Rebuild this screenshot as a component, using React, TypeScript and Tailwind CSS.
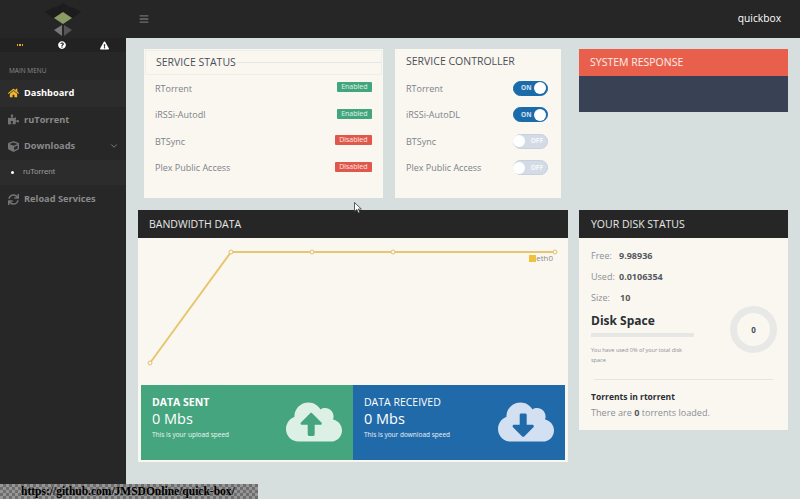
import {
  FaBars,
  FaCloudDownloadAlt,
  FaCloudUploadAlt,
  FaCube,
  FaExclamationTriangle,
  FaHome,
  FaPuzzlePiece,
  FaQuestionCircle,
  FaSync,
} from "react-icons/fa";
import { ChevronDown } from "lucide-react";

const statuses = [
  { name: "RTorrent", on: true },
  { name: "iRSSi-Autodl", on: true },
  { name: "BTSync", on: false },
  { name: "Plex Public Access", on: false },
];

const controls = [
  { name: "RTorrent", on: true },
  { name: "iRSSi-AutoDL", on: true },
  { name: "BTSync", on: false },
  { name: "Plex Public Access", on: false },
];

function Logo() {
  return (
    <svg width="42" height="34" viewBox="0 0 42 34">
      <path d="M21 0 L29 5 L21 10 L13 5Z" fill="#1d1d1d" />
      <path d="M3 9 L12 4 L20 10 L11 15Z" fill="#1c1c1c" />
      <path d="M39 9 L30 4 L22 10 L31 15Z" fill="#1c1c1c" />
      <path d="M21 9 L30 15 L21 21 L12 15Z" fill="#8b9b66" />
      <path d="M20 22 L20 33 L12 27Z" fill="#777777" />
      <path d="M22 22 L22 33 L30 27Z" fill="#555555" />
    </svg>
  );
}

function Toggle({ on }: { on: boolean }) {
  return (
    <div
      className={`flex items-center w-[35px] h-[15px] rounded-full px-[1px] border ${
        on ? "bg-[#1b6bab] border-[#1b6bab] justify-between" : "bg-[#d3dbe6] border-[#c8d0dc] flex-row-reverse justify-between"
      }`}
    >
      <span className="text-[6.5px] font-bold text-white/80 ml-[6px] mr-[3px] leading-none">
        {on ? "ON" : "OFF"}
      </span>
      <span className="w-[12px] h-[12px] rounded-full bg-white shrink-0" />
    </div>
  );
}

function NavItem({
  icon,
  label,
  active,
}: {
  icon: React.ReactNode;
  label: string;
  active?: boolean;
}) {
  return (
    <div
      className={`flex items-center h-[26.5px] pl-[8px] gap-[5px] text-[9.25px] font-bold ${
        active ? "text-white bg-[#2c2c2c]" : "text-[#8a8a8a]"
      }`}
    >
      <span className="w-[11px] flex justify-center">{icon}</span>
      {label}
    </div>
  );
}

export default function App() {
  return (
    <div className="relative w-[800px] h-[499px] overflow-hidden bg-[#d6dede] font-['Open_Sans',sans-serif]">
      <header className="flex items-center h-[38px] bg-[#262626]">
        <div className="w-[126px] flex justify-center pt-[2px]">
          <Logo />
        </div>
        <FaBars className="ml-[13px] text-[#6f6f6f]" size={10} />
        <span className="ml-auto mr-[19px] text-[10.25px] text-white">quickbox</span>
      </header>

      <div className="flex h-[461px]">
        <aside className="w-[126px] bg-[#272727] shrink-0">
          <div className="flex items-center h-[14px] bg-[#222222]">
            <span className="w-[42px] flex justify-center gap-[1px] ml-[-1px]">
              <span className="w-[1.5px] h-[2px] bg-[#e8a92c]" />
              <span className="w-[1.5px] h-[2px] bg-[#e8a92c]" />
              <span className="w-[1.5px] h-[2px] bg-[#e8a92c]" />
            </span>
            <span className="w-[42px] flex justify-center text-white">
              <FaQuestionCircle size={8} />
            </span>
            <span className="w-[42px] flex justify-center text-white">
              <FaExclamationTriangle size={9} />
            </span>
          </div>
          <p className="pl-[9px] mt-[14px] mb-[5px] text-[6.5px] leading-[9px] text-[#8b8b8b]">MAIN MENU</p>
          <NavItem active icon={<FaHome className="text-[#f2b52d]" size={12} />} label="Dashboard" />
          <NavItem icon={<FaPuzzlePiece className="text-[#747474]" size={11} />} label="ruTorrent" />
          <div className="relative">
            <NavItem icon={<FaCube className="text-[#747474]" size={11} />} label="Downloads" />
            <ChevronDown className="absolute right-[7px] top-[8px] text-[#8a8a8a]" size={10} />
          </div>
          <div className="flex items-center h-[25px] pl-[11px] bg-[#2c2c2c] text-[8px] text-[#9a9a9a] font-['Liberation_Sans',sans-serif]">
            <span className="w-[3px] h-[3px] rounded-full bg-white mr-[9px]" />
            ruTorrent
          </div>
          <div className="mt-[1.5px]">
            <NavItem icon={<FaSync className="text-[#747474]" size={11} />} label="Reload Services" />
          </div>
        </aside>

        <main className="flex-1 pl-[12px] pr-[12px] pt-[11px]">
          <div className="flex items-start h-[161px]">
            <section className="ml-[6px] w-[239px] h-[149px] bg-[#faf7f1]">
              <div className="h-[25px] mx-[1px] mt-[1px] pl-[10px] flex items-center border border-[#eeeeea] text-[10.5px] text-[#4a4f57]">
                SERVICE STATUS
                <span className="flex-1 h-[1px] bg-[#e6e6e2] ml-[1px]" />
              </div>
              <div className="pl-[11px] pr-[11px]">
                {statuses.map((s) => (
                  <div key={s.name} className="flex items-center justify-between h-[26.5px] text-[9px] text-[#7d8288]">
                    {s.name}
                    <span
                      className={`h-[10px] -mt-[2px] flex items-center px-[4.5px] rounded-[1px] text-[7px] text-white/85 ${
                        s.on ? "bg-[#41a67e]" : "bg-[#e0584c]"
                      }`}
                    >
                      {s.on ? "Enabled" : "Disabled"}
                    </span>
                  </div>
                ))}
              </div>
            </section>

            <section className="ml-[12px] w-[166px] h-[149px] bg-[#faf7f1]">
              <div className="h-[26px] pl-[11px] flex items-center text-[10.5px] text-[#4a4f57]">SERVICE CONTROLLER</div>
              <div className="pl-[11px] pr-[13px]">
                {controls.map((c) => (
                  <div key={c.name} className="flex items-center justify-between h-[26.5px] text-[9px] text-[#7d8288]">
                    {c.name}
                    <Toggle on={c.on} />
                  </div>
                ))}
              </div>
            </section>

            <section className="ml-[18px] w-[209px]">
              <div className="h-[27px] pl-[11px] flex items-center bg-[#e8604c] text-[10.5px] text-white/90">
                SYSTEM RESPONSE
              </div>
              <div className="h-[36px] bg-[#394254]" />
            </section>
          </div>

          <div className="flex items-start">
            <section className="w-[430px] h-[252px] bg-[#faf7f1] flex flex-col">
              <div className="h-[28px] pl-[11px] pt-[1px] flex items-center bg-[#262626] text-[10.5px] text-white/90">
                BANDWIDTH DATA
              </div>
              <div className="relative h-[147px]">
                <svg className="w-full h-full" viewBox="0 0 430 147" fill="none">
                  <polyline
                    points="12,125 93,14 174,14 255,14 417,14"
                    stroke="#e6c76f"
                    strokeWidth="2"
                  />
                  {[93, 174, 255, 417].map((x) => (
                    <circle key={x} cx={x} cy={14} r="2" fill="#faf7f1" stroke="#e0c26a" strokeWidth="1" />
                  ))}
                  <circle cx={12} cy={125} r="2" fill="#faf7f1" stroke="#e0c26a" strokeWidth="1" />
                </svg>
                <div className="absolute right-[15px] top-[16px] flex items-center text-[8px] leading-none text-[#8a8a8a]">
                  <span className="w-[7px] h-[7px] bg-[#f0c23c]" />
                  eth0
                </div>
              </div>
              <div className="flex h-[75px] mx-[3px]">
                <div className="flex-1 bg-[#45a57e] flex items-center justify-between pl-[11px] pr-[11px] pb-[1px] text-white">
                  <div className="-mt-[10px]">
                    <p className="text-[10.5px] font-bold leading-[14px]">DATA SENT</p>
                    <p className="text-[14.5px] leading-[20px]">0 Mbs</p>
                    <p className="text-[6.5px] leading-[11px] text-white/90">This is your upload speed</p>
                  </div>
                  <FaCloudUploadAlt className="text-[#dcf0e6]" size={56} />
                </div>
                <div className="flex-1 bg-[#216aa9] flex items-center justify-between pl-[11px] pr-[11px] pb-[1px] text-white">
                  <div className="-mt-[10px]">
                    <p className="text-[10.5px] leading-[14px]">DATA RECEIVED</p>
                    <p className="text-[14.5px] leading-[20px]">0 Mbs</p>
                    <p className="text-[6.5px] leading-[11px] text-white/90">This is your download speed</p>
                  </div>
                  <FaCloudDownloadAlt className="text-[#d3e0f2]" size={56} />
                </div>
              </div>
            </section>

            <section className="ml-[11px] w-[209px] h-[220px] bg-[#faf7f1]">
              <div className="h-[28px] pl-[12px] pt-[1px] flex items-center bg-[#262626] text-[10.5px] text-white/90">
                YOUR DISK STATUS
              </div>
              <div className="px-[12px] pt-[7px]">
                <p className="h-[21px] flex items-center text-[9px] text-[#8b8f94]">
                  <span className="w-[28px]">Free:</span>
                  <b className="text-[#55595f]">9.98936</b>
                </p>
                <p className="h-[21px] flex items-center text-[9px] text-[#8b8f94]">
                  <span className="w-[28px]">Used:</span>
                  <b className="text-[#55595f]">0.0106354</b>
                </p>
                <p className="h-[21px] flex items-center text-[9px] text-[#8b8f94]">
                  <span className="w-[29px]">Size:</span>
                  <b className="text-[#55595f]">10</b>
                </p>
                <div className="flex items-start justify-between">
                  <div className="w-[103px]">
                    <p className="text-[12px] font-bold text-[#2b2e33] leading-[18px] mt-[4px]">Disk Space</p>
                    <div className="h-[4px] bg-[#e6e6e4] mt-[3px]" />
                    <p className="text-[5.5px] leading-[10px] text-[#8b8f94] mt-[8px]">
                      You have used 0% of your total disk space
                    </p>
                  </div>
                  <div className="w-[47px] h-[47px] -mt-[2px] mr-[-1px] rounded-full border-[7px] border-[#e8e8e6] flex items-center justify-center text-[8px] font-bold text-[#4a4f57]">
                    0
                  </div>
                </div>
                <div className="h-[1px] bg-[#e4e6e4] mt-[14px] mx-[3px]" />
                <p className="text-[8.5px] font-bold text-[#2b2e33] mt-[11px] leading-[12px]">Torrents in rtorrent</p>
                <p className="text-[9.1px] text-[#8b8f94] mt-[4px] leading-[12px]">
                  There are <b className="text-[#55595f]">0</b> torrents loaded.
                </p>
              </div>
            </section>
          </div>
        </main>
      </div>

      <div className="absolute left-0 bottom-0 w-[258px] h-[15px] pl-[21px] pt-[1px] flex items-center bg-[repeating-conic-gradient(#6e6e6e_0%_25%,#969696_0%_50%)] bg-[length:6px_6px] font-['Liberation_Serif',serif] text-[11.5px] font-bold text-black">
        https://github.com/JMSDOnline/quick-box/
      </div>

      <svg className="absolute left-[354px] top-[202px]" width="8" height="12" viewBox="0 0 8 12">
        <path d="M0.5 0.5 L0.5 9.5 L2.8 7.5 L4.4 11 L5.8 10.4 L4.3 7 L7.3 7Z" fill="#ffffff" stroke="#333333" strokeWidth="0.8" />
      </svg>
    </div>
  );
}
